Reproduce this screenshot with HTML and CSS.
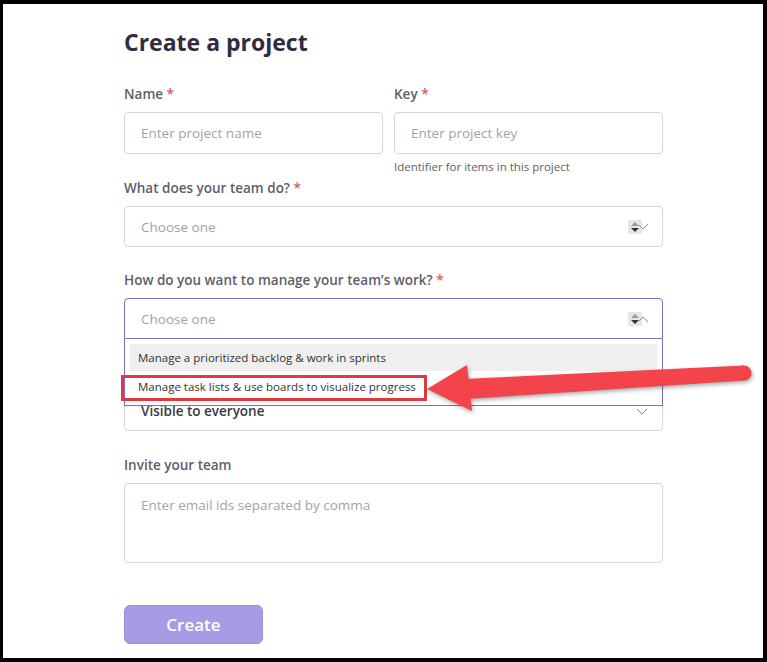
FILE: index.html
```html
<!DOCTYPE html>
<html>
<head>
  <link rel="stylesheet" href="styles.css">
</head>
<body>
  <div class="frame">
    <div class="form">
      <h1>Create a project</h1>

      <!-- name + key -->
      <div class="row">
        <div class="field half">
          <label>Name <span class="req">*</span></label>
          <div class="input placeholder">Enter project name</div>
        </div>
        <div class="field key">
          <label>Key <span class="req">*</span></label>
          <div class="input placeholder">Enter project key</div>
          <p class="hint">Identifier for items in this project</p>
        </div>
      </div>

      <div class="field team">
        <label>What does your team do? <span class="req">*</span></label>
        <div class="input select placeholder">
          Choose one
          <svg class="spin" width="22" height="14" viewBox="0 0 22 14">
            <rect x="0" y="0" width="14" height="14" fill="#e6e6e6"/>
            <path d="M3 6 L7 2 L11 6 Z" fill="#9a9a9a"/>
            <path d="M3 8 L7 12 L11 8 Z" fill="#333"/>
            <path d="M11 5 L15 9 L20 4" fill="none" stroke="#7f8fa6" stroke-width="1"/>
          </svg>
        </div>
      </div>

      <div class="field manage">
        <label>How do you want to manage your team’s work? <span class="req">*</span></label>
        <div class="dropwrap">
          <div class="input select placeholder active">
            Choose one
            <svg class="spin" width="22" height="14" viewBox="0 0 22 14">
              <rect x="0" y="0" width="14" height="14" fill="#e6e6e6"/>
              <path d="M3 6 L7 2 L11 6 Z" fill="#9a9a9a"/>
              <path d="M3 8 L7 12 L11 8 Z" fill="#333"/>
              <path d="M11 9 L15 5 L20 10" fill="none" stroke="#7f8fa6" stroke-width="1"/>
            </svg>
          </div>
          <div class="menu">
            <div class="option hover">Manage a prioritized backlog &amp; work in sprints</div>
            <div class="option">Manage task lists &amp; use boards to visualize progress</div>
          </div>
          <div class="mark"></div>
        </div>
      </div>

      <div class="field visible">
        <div class="input select value">
          Visible to everyone
          <svg class="chev" width="12" height="7" viewBox="0 0 12 7">
            <path d="M1 1 L6 6 L11 1" fill="none" stroke="#8a8a96" stroke-width="1"/>
          </svg>
        </div>
      </div>

      <div class="field invite">
        <label>Invite your team</label>
        <div class="input area placeholder">Enter email ids separated by comma</div>
      </div>

      <button class="create">Create</button>
    </div>

    <!-- callout arrow -->
    <svg class="arrow" width="340" height="70" viewBox="420 350 340 70">
      <g fill="#f2444a">
        <polygon points="464,379 744,365.5 744,380.5 466,399"/>
        <circle cx="744" cy="373" r="7.5"/>
        <polygon points="427,389 467,365 472,411"/>
      </g>
    </svg>
  </div>
</body>
</html>
```

FILE: styles.css
```css
html, body {
  margin: 0;
  height: 100%;
}

body {
  background: #000;
  font-family: "Open Sans", "Noto Sans", sans-serif;
  position: relative;
}

.frame {
  position: absolute;
  top: 4px;
  left: 3px;
  right: 4px;
  bottom: 4px;
  background: #fff;
  overflow: hidden;
}

.form {
  width: 539px;
  margin-left: 121px;
  display: flex;
  flex-direction: column;
}

h1 {
  margin: 23px 0 0;
  font-size: 23px;
  line-height: 30px;
  font-weight: 700;
  color: #2f2c3f;
}

label {
  display: block;
  font-size: 13.5px;
  line-height: 20px;
  font-weight: 600;
  color: #5f5d6b;
  margin-bottom: 8px;
}

.req {
  color: #e0585e;
}

.row {
  display: flex;
  gap: 11px;
  margin-top: 27px;
}

.half {
  width: 259px;
}

.key {
  flex: 1;
}

.input {
  box-sizing: border-box;
  height: 42px;
  border: 1px solid #d6d6dc;
  border-radius: 4px;
  padding: 0 16px;
  font-size: 13.5px;
  display: flex;
  align-items: center;
  position: relative;
}

.placeholder {
  color: #a3a2ab;
}

.hint {
  margin: 4px 0 0;
  font-size: 11.5px;
  line-height: 17px;
  color: #5f5d6b;
}

.team {
  margin-top: 3px;
}

.select {
  height: 41px;
}

.spin {
  position: absolute;
  right: 12px;
  top: 13px;
}

.manage {
  margin-top: 23px;
}

.dropwrap {
  position: relative;
  z-index: 2;
}

.active {
  border-color: #7c6bc4;
  border-radius: 4px 4px 0 0;
}

.menu {
  position: absolute;
  top: 100%;
  left: 0;
  right: 0;
  box-sizing: border-box;
  height: 67px;
  background: #fff;
  border: 1px solid #7c6bc4;
  border-top: none;
  padding: 5px 5px 0;
}

.option {
  height: 27px;
  line-height: 27px;
  padding-left: 8px;
  font-size: 11.5px;
  color: #333;
}

.option.hover {
  background: #efefef;
}

.option + .option {
  margin-top: 2px;
}

.mark {
  position: absolute;
  left: -3px;
  top: 77px;
  width: 306px;
  height: 26px;
  box-sizing: border-box;
  border: 3px solid #e2383e;
}

.visible {
  margin-top: 51px;
}

.value {
  color: #3a3845;
  font-weight: 600;
  height: 41px;
  padding-top: 1px;
}

.chev {
  position: absolute;
  right: 14px;
  top: 17px;
}

.invite {
  margin-top: 24px;
}

.area {
  height: 80px;
  align-items: flex-start;
  padding-top: 12px;
}

.create {
  margin-top: 42px;
  width: 139px;
  height: 39px;
  border: 1px solid #9d8fdc;
  border-radius: 6px;
  background: #a99ae6;
  color: #fff;
  font-family: "Open Sans", "Noto Sans", sans-serif;
  font-size: 17px;
  font-weight: 600;
}

.arrow {
  position: absolute;
  left: 417px;
  top: 346px;
  z-index: 3;
  filter: drop-shadow(1px 2px 2px rgba(0, 0, 0, 0.35));
}
```
